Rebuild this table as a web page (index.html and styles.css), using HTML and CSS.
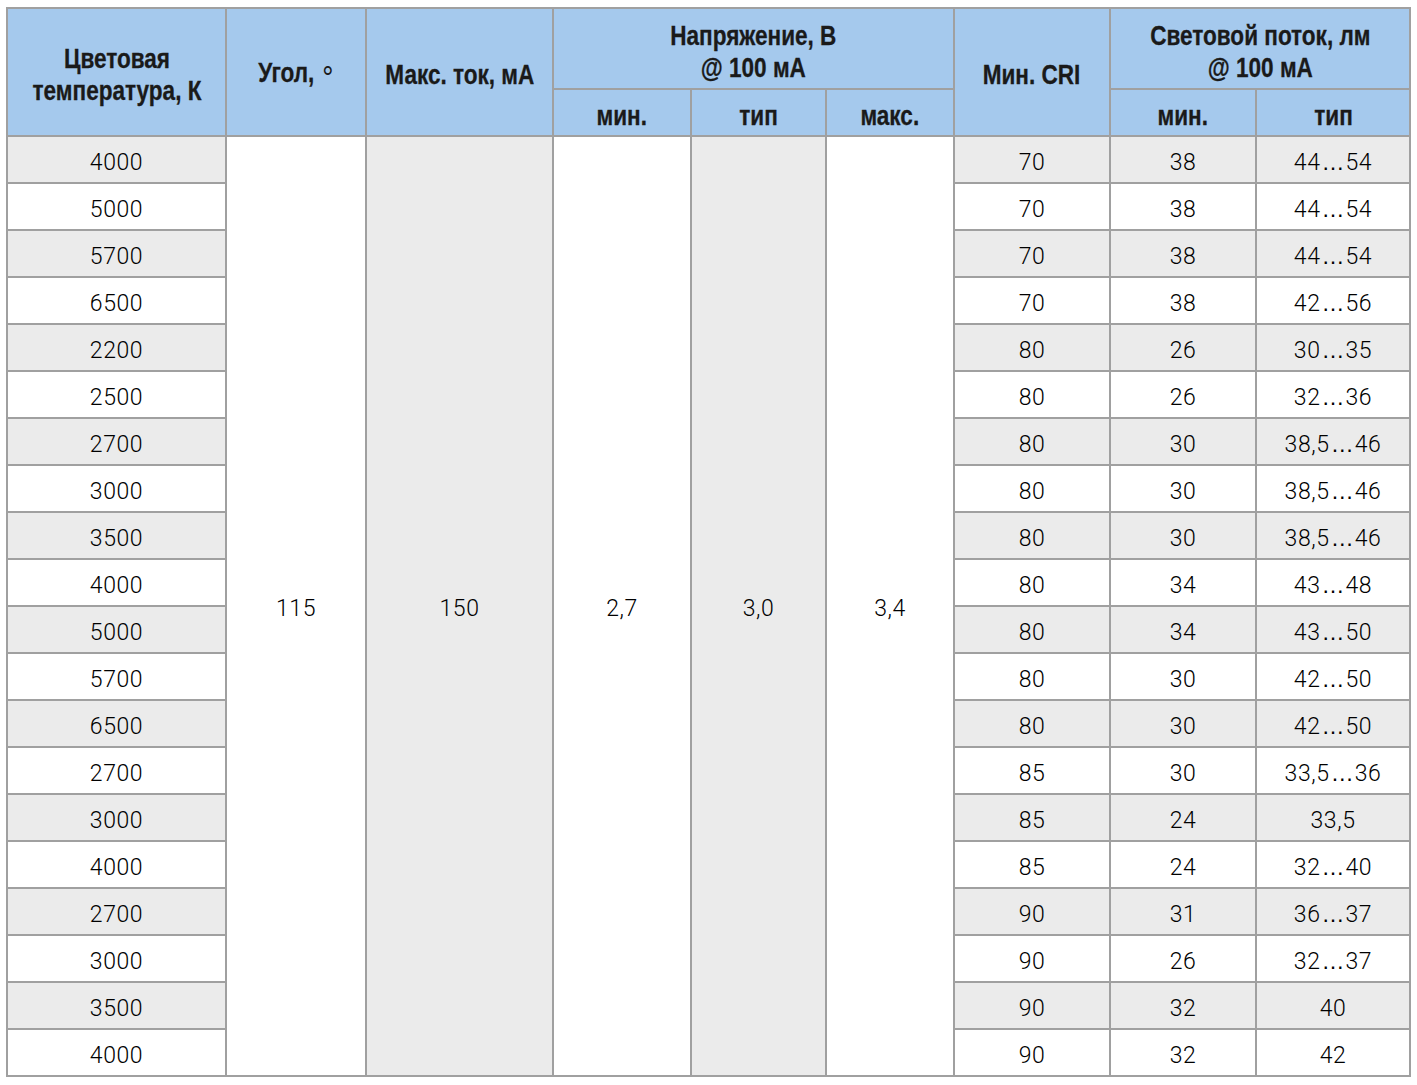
FILE: index.html
```html
<!DOCTYPE html>
<html lang="ru">
<head>
<meta charset="utf-8">
<title>Таблица</title>
<link rel="stylesheet" href="styles.css">
</head>
<body>
<table class="spec">
  <colgroup>
    <col class="c1"><col class="c2"><col class="c3"><col class="c4"><col class="c5"><col class="c6"><col class="c7"><col class="c8"><col class="c9">
  </colgroup>
  <thead>
    <tr class="h1">
      <th rowspan="2"><span class="n">Цветовая<br>температура, К</span></th>
      <th rowspan="2"><span class="n">Угол, <span class="deg">°</span></span></th>
      <th rowspan="2"><span class="n">Макс. ток, мА</span></th>
      <th colspan="3"><span class="n">Напряжение, В<br>@ 100 мА</span></th>
      <th rowspan="2"><span class="n">Мин. CRI</span></th>
      <th colspan="2"><span class="n">Световой поток, лм<br>@ 100 мА</span></th>
    </tr>
    <tr class="h2">
      <th><span class="n">мин.</span></th><th><span class="n">тип</span></th><th><span class="n">макс.</span></th>
      <th><span class="n">мин.</span></th><th><span class="n">тип</span></th>
    </tr>
  </thead>
  <tbody>
    <tr class="g"><td>4000</td><td rowspan="20" class="w">115</td><td rowspan="20" class="gr">150</td><td rowspan="20" class="w">2,7</td><td rowspan="20" class="gr">3,0</td><td rowspan="20" class="w">3,4</td><td>70</td><td>38</td><td>44<span class="el">…</span>54</td></tr>
    <tr><td>5000</td><td>70</td><td>38</td><td>44<span class="el">…</span>54</td></tr>
    <tr class="g"><td>5700</td><td>70</td><td>38</td><td>44<span class="el">…</span>54</td></tr>
    <tr><td>6500</td><td>70</td><td>38</td><td>42<span class="el">…</span>56</td></tr>
    <tr class="g"><td>2200</td><td>80</td><td>26</td><td>30<span class="el">…</span>35</td></tr>
    <tr><td>2500</td><td>80</td><td>26</td><td>32<span class="el">…</span>36</td></tr>
    <tr class="g"><td>2700</td><td>80</td><td>30</td><td>38,5<span class="el">…</span>46</td></tr>
    <tr><td>3000</td><td>80</td><td>30</td><td>38,5<span class="el">…</span>46</td></tr>
    <tr class="g"><td>3500</td><td>80</td><td>30</td><td>38,5<span class="el">…</span>46</td></tr>
    <tr><td>4000</td><td>80</td><td>34</td><td>43<span class="el">…</span>48</td></tr>
    <tr class="g"><td>5000</td><td>80</td><td>34</td><td>43<span class="el">…</span>50</td></tr>
    <tr><td>5700</td><td>80</td><td>30</td><td>42<span class="el">…</span>50</td></tr>
    <tr class="g"><td>6500</td><td>80</td><td>30</td><td>42<span class="el">…</span>50</td></tr>
    <tr><td>2700</td><td>85</td><td>30</td><td>33,5<span class="el">…</span>36</td></tr>
    <tr class="g"><td>3000</td><td>85</td><td>24</td><td>33,5</td></tr>
    <tr><td>4000</td><td>85</td><td>24</td><td>32<span class="el">…</span>40</td></tr>
    <tr class="g"><td>2700</td><td>90</td><td>31</td><td>36<span class="el">…</span>37</td></tr>
    <tr><td>3000</td><td>90</td><td>26</td><td>32<span class="el">…</span>37</td></tr>
    <tr class="g"><td>3500</td><td>90</td><td>32</td><td>40</td></tr>
    <tr><td>4000</td><td>90</td><td>32</td><td>42</td></tr>
  </tbody>
</table>
</body>
</html>
```

FILE: styles.css
```css
html, body {
  margin: 0;
  padding: 0;
  background: #ffffff;
}
body {
  padding: 7px 0 0 6px;
}
.spec {
  border-collapse: collapse;
  table-layout: fixed;
  width: 1405px;
  border: 2px solid #a0a0a0;
  font-family: "Roboto", "Liberation Sans", sans-serif;
  color: #1c1c1c;
}
.c1 { width: 219px; }
.c2 { width: 140px; }
.c3 { width: 187px; }
.c4 { width: 138px; }
.c5 { width: 135px; }
.c6 { width: 128px; }
.c7 { width: 156px; }
.c8 { width: 146px; }
.c9 { width: 154px; }

.spec th, .spec td {
  border: 2px solid #a0a0a0;
  padding: 0;
  text-align: center;
  vertical-align: middle;
}
.spec th {
  background: #a5c9ed;
  font-family: "Liberation Sans", Arial, sans-serif;
  font-weight: bold;
  font-size: 27.5px;
  line-height: 32px;
  color: #1a1a1a;
  white-space: nowrap;
  padding-top: 6px;
  -webkit-text-stroke: 0.3px #1a1a1a;
}
.n {
  display: inline-block;
  transform: scaleX(0.82);
  transform-origin: 50% 50%;
}
.deg {
  font-size: 34px;
  font-weight: 300;
  -webkit-text-stroke: 0;
  vertical-align: -7px;
  margin-left: 2px;
}
.h1 { height: 81px; }
.h2 { height: 47px; }
.spec tbody tr { height: 47px; }
.spec td {
  font-size: 23px;
  letter-spacing: 0.6px;
  font-weight: 300;
  background: #ffffff;
  color: #000000;
  padding-top: 5px;
}
.el {
  font-family: "Liberation Sans", Arial, sans-serif;
  letter-spacing: 0;
  padding: 0 1px;
}
.spec tr.g td { background: #ebebeb; }
.spec tr.g td.w, .spec td.w { background: #ffffff; }
.spec td.gr { background: #ebebeb; }
```
